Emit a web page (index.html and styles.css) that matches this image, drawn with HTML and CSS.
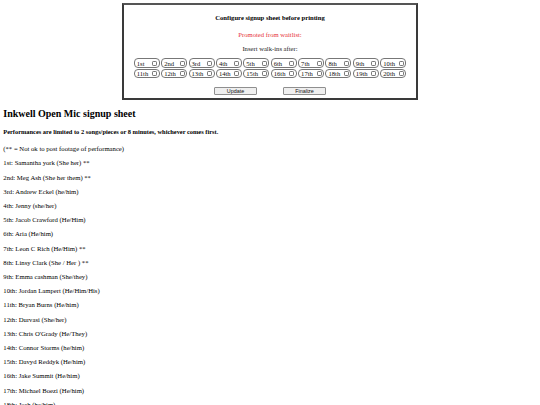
FILE: index.html
```html
<!DOCTYPE html>
<html lang="en">
<head>
    <meta charset="UTF-8">
    <meta name="viewport" content="width=device-width, initial-scale=1.0">
    <title>Inkwell Open Mic signup sheet</title>
    <link rel="stylesheet" href="styles.css">
</head>
<body>
    <div class="config-panel">
        <p class="config-title">Configure signup sheet before printing</p>
        <p class="promoted">Promoted from waitlist:</p>
        <p class="walkins-label">Insert walk-ins after:</p>

        <div class="slot-row">
            <label class="slot">1st <input type="checkbox"></label>
            <label class="slot">2nd <input type="checkbox"></label>
            <label class="slot">3rd <input type="checkbox"></label>
            <label class="slot">4th <input type="checkbox"></label>
            <label class="slot">5th <input type="checkbox"></label>
            <label class="slot">6th <input type="checkbox"></label>
            <label class="slot">7th <input type="checkbox"></label>
            <label class="slot">8th <input type="checkbox"></label>
            <label class="slot">9th <input type="checkbox"></label>
            <label class="slot">10th <input type="checkbox"></label>
        </div>
        <div class="slot-row">
            <label class="slot">11th <input type="checkbox"></label>
            <label class="slot">12th <input type="checkbox"></label>
            <label class="slot">13th <input type="checkbox"></label>
            <label class="slot">14th <input type="checkbox"></label>
            <label class="slot">15th <input type="checkbox"></label>
            <label class="slot">16th <input type="checkbox"></label>
            <label class="slot">17th <input type="checkbox"></label>
            <label class="slot">18th <input type="checkbox"></label>
            <label class="slot">19th <input type="checkbox"></label>
            <label class="slot">20th <input type="checkbox"></label>
        </div>

        <div class="actions">
            <button class="action-btn">Update</button>
            <button class="action-btn">Finalize</button>
        </div>
    </div>

    <h2>Inkwell Open Mic signup sheet</h2>
    <p class="rules">Performances are limited to 2 songs/pieces or 8 minutes, whichever comes first.</p>

    <div class="signup-list">
        <p>(** = Not ok to post footage of performance)</p>
        <p>1st: Samantha york (She her) **</p>
        <p>2nd: Meg Ash (She her them) **</p>
        <p>3rd: Andrew Eckel (he/him)</p>
        <p>4th: Jenny (she/her)</p>
        <p>5th: Jacob Crawford (He/Him)</p>
        <p>6th: Aria (He/him)</p>
        <p>7th: Leon C Rich (He/Him) **</p>
        <p>8th: Linsy Clark (She / Her ) **</p>
        <p>9th: Emma cashman (She/they)</p>
        <p>10th: Jordan Lampert (He/Him/His)</p>
        <p>11th: Bryan Burns (He/him)</p>
        <p>12th: Durvasi (She/her)</p>
        <p>13th: Chris O'Grady (He/They)</p>
        <p>14th: Connor Storms (he/him)</p>
        <p>15th: Davyd Reddyk (He/him)</p>
        <p>16th: Jake Summit (He/him)</p>
        <p>17th: Michael Boezi (He/him)</p>
        <p>18th: Josh (he/him)</p>
    </div>
</body>
</html>
```

FILE: styles.css
```css
body {
    font-family: "Liberation Serif", "Times New Roman", serif;
    font-size: 6.64px;
    color: #000;
    margin: 3.3px;
    background-color: #fff;
}

.config-panel {
    width: 292px;
    margin: 0 auto;
    border: 2px solid #3a3a3a;
    border-top-color: #555;
    padding: 8.5px 0 3.5px;
    text-align: center;
}

.config-panel p {
    margin: 0;
    line-height: 7.6px;
}

.config-title {
    font-weight: bold;
}

.promoted {
    color: #e62e36;
    margin-top: 9.4px !important;
}

.walkins-label {
    margin-top: 6.4px !important;
    color: #222;
}

.slot-row {
    display: flex;
    justify-content: center;
    gap: 1.4px;
}

.slot-row:first-of-type {
    margin-top: 6px;
}

.slot-row + .slot-row {
    margin-top: 1px;
}

.slot {
    display: inline-flex;
    align-items: center;
    justify-content: space-between;
    box-sizing: border-box;
    width: 26px;
    height: 9.5px;
    padding: 0 1.5px 0 2px;
    border: 1px solid #777;
    border-radius: 4px;
    color: #111;
}

.slot input {
    appearance: none;
    width: 5px;
    height: 5px;
    margin: 0;
    border: 0.8px solid #777;
    border-radius: 1.2px;
    background: #fff;
}

.actions {
    display: flex;
    justify-content: center;
    gap: 26px;
    margin-top: 8.5px;
}

.action-btn {
    width: 43px;
    height: 8px;
    padding: 0;
    font-family: "Liberation Sans", Arial, sans-serif;
    font-size: 5.4px;
    color: #111;
    background-color: #efefef;
    border: 0.8px solid #8f8f8f;
    border-radius: 1px;
}

h2 {
    font-size: 10px;
    margin: 8px 0 0;
}

.rules {
    font-size: 6.4px;
    font-weight: bold;
    margin: 8.9px 0 0;
}

.signup-list {
    padding-top: 3.4px;
}

.signup-list p {
    font-size: 6.7px;
    margin: 6.5px 0;
    line-height: 7.7px;
}
```
